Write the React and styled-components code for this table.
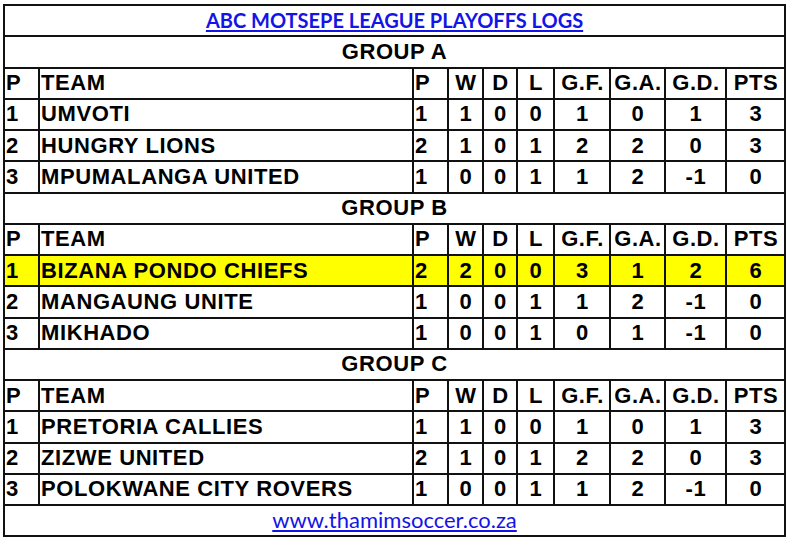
import React from "react";
import styled, { createGlobalStyle } from "styled-components";

const groups = [
  {
    name: "GROUP A",
    rows: [
      ["1", "UMVOTI", 1, 1, 0, 0, 1, 0, 1, 3],
      ["2", "HUNGRY LIONS", 2, 1, 0, 1, 2, 2, 0, 3],
      ["3", "MPUMALANGA UNITED", 1, 0, 0, 1, 1, 2, -1, 0],
    ],
  },
  {
    name: "GROUP B",
    rows: [
      ["1", "BIZANA PONDO CHIEFS", 2, 2, 0, 0, 3, 1, 2, 6, true],
      ["2", "MANGAUNG UNITE", 1, 0, 0, 1, 1, 2, -1, 0],
      ["3", "MIKHADO", 1, 0, 0, 1, 0, 1, -1, 0],
    ],
  },
  {
    name: "GROUP C",
    rows: [
      ["1", "PRETORIA CALLIES", 1, 1, 0, 0, 1, 0, 1, 3],
      ["2", "ZIZWE UNITED", 2, 1, 0, 1, 2, 2, 0, 3],
      ["3", "POLOKWANE CITY ROVERS", 1, 0, 0, 1, 1, 2, -1, 0],
    ],
  },
];

const widths = [35, 374, 35, 35, 34, 37, 56, 55, 61, 59];
const heads = ["W", "D", "L", "G.F.", "G.A.", "G.D.", "PTS"];

function App() {
  return (
    <>
      <Global />
      <Sheet>
        <Log>
          <colgroup>
            {widths.map((w, i) => (
              <col key={i} style={{ width: w }} />
            ))}
          </colgroup>
          <tbody>
            <tr>
              <Banner colSpan={10}>
                <TitleLink href="#">ABC MOTSEPE LEAGUE PLAYOFFS LOGS</TitleLink>
              </Banner>
            </tr>
            {groups.map((g) => (
              <React.Fragment key={g.name}>
                <tr>
                  <GroupCell colSpan={10}>{g.name}</GroupCell>
                </tr>
                <tr>
                  <Cell>P</Cell>
                  <Cell>TEAM</Cell>
                  <Cell>P</Cell>
                  {heads.map((h) => (
                    <Cell key={h} center>
                      {h}
                    </Cell>
                  ))}
                </tr>
                {g.rows.map((r) => (
                  <Row key={r[1]} hl={r[10]}>
                    <Cell>{r[0]}</Cell>
                    <Cell>{r[1]}</Cell>
                    <Cell>{r[2]}</Cell>
                    {r.slice(3, 10).map((v, i) => (
                      <Cell key={i} center>
                        {v}
                      </Cell>
                    ))}
                  </Row>
                ))}
              </React.Fragment>
            ))}
            <tr>
              <Banner colSpan={10}>
                <SiteLink href="#">www.thamimsoccer.co.za</SiteLink>
              </Banner>
            </tr>
          </tbody>
        </Log>
      </Sheet>
    </>
  );
}

export default App;

const Global = createGlobalStyle`
  body {
    margin: 0;
    background: #fff;
  }
`;

const Sheet = styled.div`
  padding: 4px 0 0 3px;
`;

const Log = styled.table`
  width: 783px;
  table-layout: fixed;
  border-collapse: collapse;
  border: 2px solid #111;
  font-family: "Liberation Sans", Arial, sans-serif;
  font-weight: bold;
  font-size: 22px;
  letter-spacing: 0.6px;
  color: #000;

  tr {
    height: 31.25px;
  }
`;

const Row = styled.tr`
  background: ${(props) => (props.hl ? "#ffff00" : "transparent")};
`;

const Cell = styled.td`
  border: 2px solid #111;
  padding: 0 0 0 1px;
  text-align: ${(props) => (props.center ? "center" : "left")};
  white-space: nowrap;
  overflow: hidden;
  line-height: 1;
`;

const GroupCell = styled.td`
  border: 2px solid #111;
  text-align: center;
  padding: 0;
  line-height: 1;
`;

const Banner = styled.td`
  border: 2px solid #111;
  text-align: center;
  padding: 0;
  line-height: 1;
  letter-spacing: 0;
`;

const TitleLink = styled.a`
  font-family: Lato, "Open Sans", sans-serif;
  font-weight: bold;
  font-size: 20px;
  color: #1414e6;
  text-decoration: underline;
  text-underline-offset: 2px;
`;

const SiteLink = styled.a`
  font-family: Lato, "Open Sans", sans-serif;
  font-weight: normal;
  font-size: 22px;
  color: #1414e6;
  text-decoration: underline;
  text-underline-offset: 2px;
`;
